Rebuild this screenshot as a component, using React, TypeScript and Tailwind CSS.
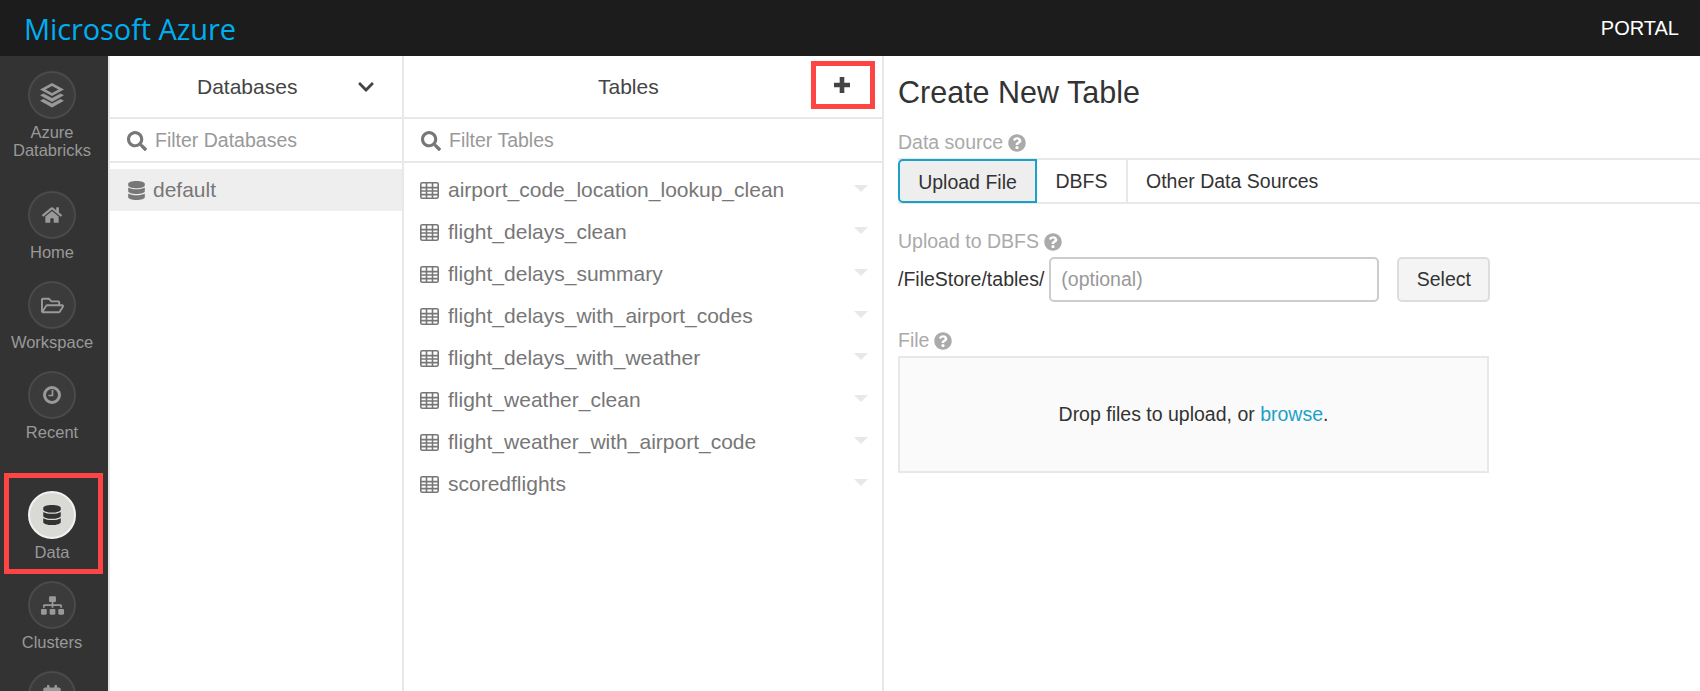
import type { ReactNode } from "react";
import {
  FaCalendarAlt,
  FaChevronDown,
  FaDatabase,
  FaHome,
  FaQuestionCircle,
  FaRegFolderOpen,
  FaSearch,
  FaSitemap,
} from "react-icons/fa";

const tables = [
  "airport_code_location_lookup_clean",
  "flight_delays_clean",
  "flight_delays_summary",
  "flight_delays_with_airport_codes",
  "flight_delays_with_weather",
  "flight_weather_clean",
  "flight_weather_with_airport_code",
  "scoredflights",
];

function LayersIcon() {
  return (
    <svg width="26" height="26" viewBox="0 0 26 26" fill="currentColor">
      <path d="M13 1 25 7.5 13 14 1 7.5Z M13 4 6.5 7.5 13 11 19.5 7.5Z" fillRule="evenodd" />
      <path d="M4.5 11.5 13 16 21.5 11.5 25 13.3 13 20 1 13.3Z" />
      <path d="M4.5 17 13 21.5 21.5 17 25 18.8 13 25.5 1 18.8Z" />
    </svg>
  );
}

function ClockIcon() {
  return (
    <svg width="20" height="20" viewBox="0 0 20 20" fill="none" stroke="currentColor" strokeWidth="3">
      <circle cx="10" cy="10" r="7.5" />
      <path d="M10.5 5v5.5H6.5" strokeWidth="1.7" />
    </svg>
  );
}

function TableIcon() {
  return (
    <svg width="19" height="17" viewBox="0 0 19 17" fill="none" stroke="currentColor" strokeWidth="1.6" className="shrink-0">
      <rect x="0.8" y="0.8" width="17.4" height="15.4" rx="1.5" />
      <path d="M0.8 5.6h17.4M0.8 9h17.4M0.8 12.6h17.4M6.5 1v15M12.5 1v15" />
    </svg>
  );
}

function PlusIcon() {
  return (
    <svg width="18" height="18" viewBox="0 0 18 18" fill="currentColor">
      <path d="M6.7 1h4.6v5.7H17v4.6h-5.7V17H6.7v-5.7H1V6.7h5.7Z" />
    </svg>
  );
}

function NavItem({
  icon,
  label,
  tall,
  active,
}: {
  icon: ReactNode;
  label?: ReactNode;
  tall?: boolean;
  active?: boolean;
}) {
  return (
    <div className={`relative flex shrink-0 flex-col items-center ${tall ? "h-[120px]" : "h-[90px]"}`}>
      <div
        className={`flex h-12 w-12 items-center justify-center rounded-full border-2 ${
          active ? "border-[#f2f2f2] bg-[#d9d9d6] text-[#333]" : "border-[#4a4a4a] bg-[#3b3b3b] text-[#999]"
        }`}
      >
        {icon}
      </div>
      {label && <div className="mt-1 text-center text-[16.5px] leading-[18px] text-[#999]">{label}</div>}
      {active && <div className="absolute top-[-18px] left-1 h-[101px] w-[99px] border-[5px] border-[#ff4444]" />}
    </div>
  );
}

function Help() {
  return <FaQuestionCircle size={18} className="ml-[5px] text-[#aaa]" />;
}

function FilterRow({ placeholder, pad }: { placeholder: string; pad: string }) {
  return (
    <div className={`flex h-[46px] shrink-0 items-center border-y-2 border-[#e8e8e8] pt-0.5 ${pad}`}>
      <FaSearch size={20} className="shrink-0 text-[#777]" />
      <input
        placeholder={placeholder}
        className="ml-2 w-full bg-transparent text-[19.5px] text-[#777] outline-none placeholder:text-[#999]"
      />
    </div>
  );
}

export default function App() {
  return (
    <div className="flex h-[691px] flex-col overflow-hidden bg-white font-['Liberation_Sans',Arial,sans-serif] text-[#333]">
      <header className="flex h-14 shrink-0 items-center justify-between bg-[#1c1c1c] pr-[21px] pl-[24px]">
        <span className="font-['Open_Sans',sans-serif] text-[29px] leading-none font-normal tracking-[-0.1px] text-[#00aeef]">
          Microsoft Azure
        </span>
        <span className="text-[20px] text-white">PORTAL</span>
      </header>

      <div className="flex min-h-0 flex-1">
        <nav className="flex w-[108px] shrink-0 flex-col overflow-hidden bg-[#333] pt-[15px] pr-1">
          <NavItem
            tall
            icon={<LayersIcon />}
            label={
              <>
                Azure
                <br />
                Databricks
              </>
            }
          />
          <NavItem icon={<FaHome size={20} />} label="Home" />
          <NavItem icon={<FaRegFolderOpen size={23} />} label="Workspace" />
          <NavItem tall icon={<ClockIcon />} label="Recent" />
          <NavItem active icon={<FaDatabase size={20} />} label="Data" />
          <NavItem icon={<FaSitemap size={23} />} label="Clusters" />
          <NavItem icon={<FaCalendarAlt size={20} />} />
        </nav>

        {/* Databases */}
        <section className="flex w-[296px] shrink-0 flex-col border-x-2 border-[#e8e8e8]">
          <div className="flex h-[61px] shrink-0 items-center justify-between pr-[27px] pl-[87px] text-[21px] text-[#444]">
            <span>Databases</span>
            <FaChevronDown size={18} className="text-[#444]" />
          </div>
          <FilterRow placeholder="Filter Databases" pad="pl-[17px]" />
          <div className="pt-1.5">
            <div className="flex h-[42px] items-center bg-[#eee] pl-[17px] text-[21px] text-[#777]">
              <FaDatabase size={19} className="mr-[7px] shrink-0" />
              default
            </div>
          </div>
        </section>

        {/* Tables */}
        <section className="flex w-[480px] shrink-0 flex-col border-r-2 border-[#e8e8e8]">
          <div className="flex h-[61px] shrink-0 items-center justify-between pr-[7px] pl-[194px] text-[21px] text-[#444]">
            <span>Tables</span>
            <button className="mb-[3px] flex h-12 w-16 items-center justify-center border-[5px] border-[#ff4444] pr-[3px] text-[#444]">
              <PlusIcon />
            </button>
          </div>
          <FilterRow placeholder="Filter Tables" pad="pl-[17px]" />
          <ul className="pt-1.5">
            {tables.map((name) => (
              <li key={name} className="flex h-[42px] items-center pr-[14px] pl-[16px] text-[21px] text-[#777]">
                <TableIcon />
                <span className="ml-[9px] flex-1">{name}</span>
                <span className="mb-1 h-0 w-0 border-x-[7px] border-t-[7px] border-x-transparent border-t-[#e8e8e8]" />
              </li>
            ))}
          </ul>
        </section>

        {/* Create New Table */}
        <main className="min-w-0 flex-1 pt-[18px] pl-[14px] text-[19.5px]">
          <h1 className="text-[30.5px] leading-[36px] text-[#333]">Create New Table</h1>

          <div className="mt-[21px] flex h-[24px] items-center text-[#aaa]">
            Data source
            <Help />
          </div>
          <div className="mt-[3px] flex h-[46px] items-stretch border-y-2 border-[#e8e8e8]">
            <button className="-my-px flex w-[139px] items-center justify-center rounded-l-[5px] border-2 border-[#1ba1c8] bg-[#eee] pt-[3px]">
              Upload File
            </button>
            <button className="flex w-[91px] items-center justify-center border-r-2 border-[#e8e8e8] pt-0.5">DBFS</button>
            <button className="px-[18px] pt-0.5">Other Data Sources</button>
          </div>

          <div className="mt-[26px] flex h-[24px] items-center text-[#aaa]">
            Upload to DBFS
            <Help />
          </div>
          <div className="mt-[3px] flex items-center">
            <span>/FileStore/tables/</span>
            <input
              placeholder="(optional)"
              className="ml-[5px] h-[45px] w-[330px] rounded-[5px] border-2 border-[#ccc] px-[10px] outline-none placeholder:text-[#999]"
            />
            <button className="ml-[18px] h-[45px] w-[93px] rounded-[5px] border-2 border-[#ddd] bg-[#f4f4f4]">
              Select
            </button>
          </div>

          <div className="mt-[27px] flex h-[24px] items-center text-[#aaa]">
            File
            <Help />
          </div>
          <div className="mt-[3px] flex h-[117px] w-[591px] items-center justify-center border-2 border-[#e8e8e8] bg-[#fafafa]">
            <span>
              Drop files to upload, or <a className="text-[#1ba1c8]">browse</a>.
            </span>
          </div>
        </main>
      </div>
    </div>
  );
}
